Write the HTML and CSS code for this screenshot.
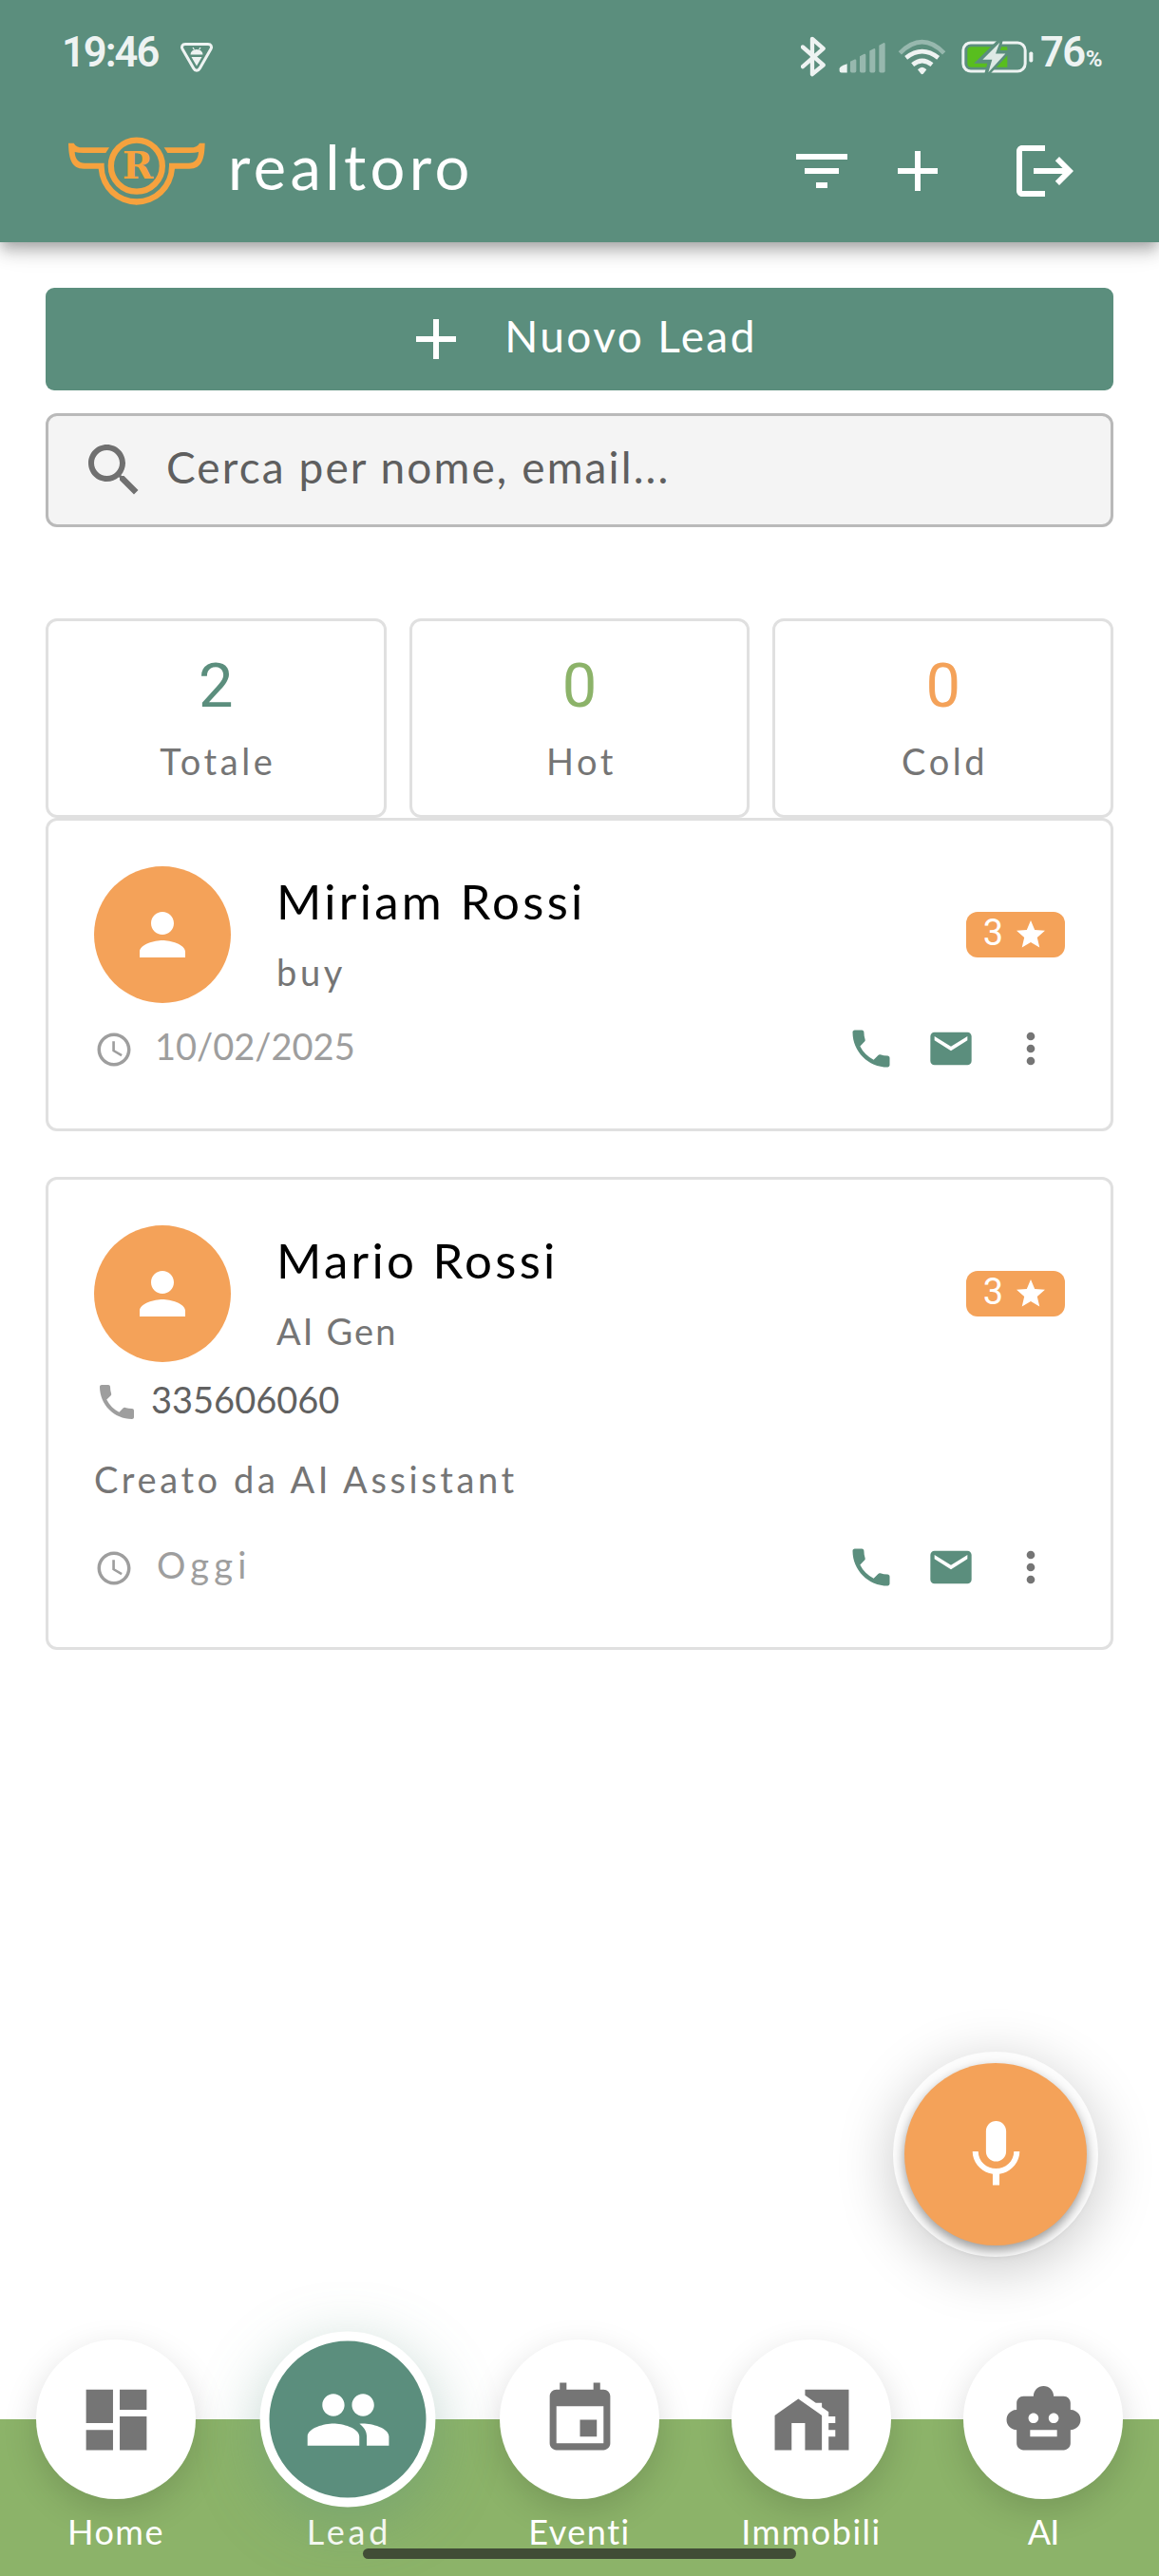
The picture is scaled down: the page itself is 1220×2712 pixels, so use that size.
FILE: index.html
```
<!DOCTYPE html>
<html lang="it">
<head>
  <meta charset="UTF-8">
  <meta name="viewport" content="width=device-width, initial-scale=1.0">
  <title>Realtoro - Lead</title>
  <link rel="stylesheet" href="styles.css">
</head>
<body>
  <!-- icone riutilizzate -->
  <svg class="sprite" aria-hidden="true">
    <symbol id="i-add" viewBox="0 0 24 24"><path d="M19 13h-6v6h-2v-6H5v-2h6V5h2v6h6z"/></symbol>
    <symbol id="i-person" viewBox="0 0 24 24"><path d="M12 12c2.21 0 4-1.79 4-4s-1.79-4-4-4-4 1.79-4 4 1.79 4 4 4zm0 2c-2.67 0-8 1.34-8 4v2h16v-2c0-2.66-5.33-4-8-4z"/></symbol>
    <symbol id="i-star" viewBox="0 0 24 24"><path d="M12 17.27L18.18 21l-1.64-7.03L22 9.24l-7.19-.61L12 2 9.19 8.63 2 9.24l5.46 4.73L5.82 21z"/></symbol>
    <symbol id="i-clock" viewBox="0 0 24 24"><path d="M11.99 2C6.47 2 2 6.48 2 12s4.47 10 9.99 10C17.52 22 22 17.52 22 12S17.52 2 11.99 2zM12 20c-4.42 0-8-3.58-8-8s3.58-8 8-8 8 3.58 8 8-3.58 8-8 8zm.5-13H11v6l5.25 3.15.75-1.23-4.5-2.67z"/></symbol>
    <symbol id="i-phone" viewBox="0 0 24 24"><path d="M6.62 10.79c1.44 2.83 3.76 5.14 6.59 6.59l2.2-2.2c.27-.27.67-.36 1.02-.24 1.12.37 2.33.57 3.57.57.55 0 1 .45 1 1V20c0 .55-.45 1-1 1-9.39 0-17-7.61-17-17 0-.55.45-1 1-1h3.5c.55 0 1 .45 1 1 0 1.25.2 2.45.57 3.57.11.35.03.74-.25 1.02z"/></symbol>
    <symbol id="i-mail" viewBox="0 0 24 24"><path d="M20 4H4c-1.1 0-1.99.9-1.99 2L2 18c0 1.1.9 2 2 2h16c1.1 0 2-.9 2-2V6c0-1.1-.9-2-2-2zm0 4l-8 5-8-5V6l8 5 8-5z"/></symbol>
    <symbol id="i-more" viewBox="0 0 24 24"><path d="M12 8c1.1 0 2-.9 2-2s-.9-2-2-2-2 .9-2 2 .9 2 2 2zm0 2c-1.1 0-2 .9-2 2s.9 2 2 2 2-.9 2-2-.9-2-2-2zm0 6c-1.1 0-2 .9-2 2s.9 2 2 2 2-.9 2-2-.9-2-2-2z"/></symbol>
  </svg>

  <header class="header">
    <div class="status">
      <span class="time">19:46</span>
      <svg class="shield" viewBox="0 0 36 33">
        <path d="M6 2.500h24c3 0 4.300 2.300 3 5L21.300 28c-1.500 2.900-5 2.900-6.500 0L3 7.500C1.700 4.800 3 2.500 6 2.500z" fill="none" stroke="#eef3f2" stroke-width="3"/>
        <path d="M11.500 13.500a6.500 5.500 0 0 1 13 0zM12.500 16h11l-5.500 9.500z" fill="#eef3f2"/>
        <path d="M14 6l1.500 2.500M22 6l-1.500 2.500" stroke="#eef3f2" stroke-width="1.200"/>
      </svg>
      <svg class="indicators" viewBox="41 38 735 128">
        <path d="M47 72L112 129 77 158V46L112 77 47 134" fill="none" stroke="#eef3f2" stroke-width="13" stroke-linecap="round" stroke-linejoin="round"/>
        <path d="M163 140q0-8 24-15v28h-18q-6 0-6-6z" fill="#eef3f2"/>
        <path d="M197 118l14-7q5-1 5 4v33q0 5-5 5h-9q-5 0-5-5zM227 101l14-7q5-1 5 4v50q0 5-5 5h-9q-5 0-5-5zM258 84l13-7q5-1 5 4v67q0 5-5 5h-8q-5 0-5-5zM288 67l14-8q5-1 5 4v85q0 5-5 5h-9q-5 0-5-5z" fill="#97b8ae"/>
        <path d="M354 91Q424 21 493 91" fill="none" stroke="#97b8ae" stroke-width="14"/>
        <path d="M373 106Q424 66 475 106M394 128Q424 103 455 128" fill="none" stroke="#eef3f2" stroke-width="14"/>
        <path d="M410 143q14-15 28 0l-10 13q-4 4-8 0z" fill="#eef3f2"/>
        <rect x="553.500" y="58.500" width="196" height="90" rx="24" fill="none" stroke="#eef3f2" stroke-width="9"/>
        <path d="M579 71h114v65H579q-12 0-12-12V83q0-12 12-12z" fill="#58be1e"/>
        <rect x="762" y="87" width="12" height="33" rx="5" fill="#eef3f2"/>
        <path d="M671 52L606 116H640L628 158 691 90H661z" fill="#5b8e7d" stroke="#5b8e7d" stroke-width="15"/>
        <path d="M669 58L615 112H645L633 152 687 93H656z" fill="#dde9e5"/>
      </svg>
      <span class="battery">76<small>%</small></span>
    </div>
    <div class="appbar">
      <svg class="logo" viewBox="36 42 432 216">
        <defs><path id="wing" d="M36 62H53Q60 76 82 76H165L154 93H84Q66 93 56 90Q58 125 88 125H149V134A102.500 104 0 0 0 252 238V257A121 123 0 0 1 131 143H85C44 143 37 108 36 62Z"/></defs>
        <use href="#wing"/>
        <use href="#wing" transform="translate(503 0) scale(-1 1)"/>
        <circle cx="251.500" cy="134" r="81" fill="none" stroke="#f6a23e" stroke-width="19"/>
        <text class="logo-letter" x="255" y="175" text-anchor="middle">R</text>
      </svg>
      <span class="brand">realtoro</span>
      <svg class="icon filter" viewBox="0 0 24 24"><path d="M10 18h4v-2h-4v2zM3 6v2h18V6H3zm3 7h12v-2H6v2z"/></svg>
      <svg class="icon add"><use href="#i-add"/></svg>
      <svg class="icon logout" viewBox="0 0 24 24"><path d="M17 7l-1.410 1.410L18.170 11H8v2h10.170l-2.580 2.580L17 17l5-5zM4 5h8V3H4c-1.100 0-2 .9-2 2v14c0 1.100.9 2 2 2h8v-2H4V5z"/></svg>
    </div>
  </header>

  <main class="content">
    <div class="new-lead">
      <svg class="icon"><use href="#i-add"/></svg>
      <span>Nuovo Lead</span>
    </div>
    <div class="search">
      <svg class="icon" viewBox="0 0 24 24"><path d="M15.500 14h-.79l-.28-.27C15.410 12.590 16 11.110 16 9.500 16 5.910 13.090 3 9.500 3S3 5.910 3 9.500 5.910 16 9.500 16c1.610 0 3.090-.59 4.230-1.570l.27.28v.79l5 4.990L20.490 19l-4.990-5zm-6 0C7.010 14 5 11.990 5 9.500S7.010 5 9.500 5 14 7.010 14 9.500 11.990 14 9.500 14z"/></svg>
      <span>Cerca per nome, email...</span>
    </div>

    <div class="stats">
      <div class="stat total"><b>2</b><span>Totale</span></div>
      <div class="stat hot"><b>0</b><span>Hot</span></div>
      <div class="stat cold"><b>0</b><span>Cold</span></div>
    </div>

    <article class="lead">
      <div class="lead-head">
        <div class="avatar"><svg class="icon"><use href="#i-person"/></svg></div>
        <div class="who">
          <h2>Miriam Rossi</h2>
          <p>buy</p>
        </div>
        <div class="badge"><span>3</span><svg><use href="#i-star"/></svg></div>
      </div>
      <div class="lead-foot">
        <svg class="clock"><use href="#i-clock"/></svg>
        <span class="date digits">10/02/2025</span>
        <div class="actions">
          <svg><use href="#i-phone"/></svg>
          <svg><use href="#i-mail"/></svg>
          <svg class="more"><use href="#i-more"/></svg>
        </div>
      </div>
    </article>

    <article class="lead">
      <div class="lead-head">
        <div class="avatar"><svg class="icon"><use href="#i-person"/></svg></div>
        <div class="who">
          <h2>Mario Rossi</h2>
          <p class="source">AI Gen</p>
        </div>
        <div class="badge"><span>3</span><svg><use href="#i-star"/></svg></div>
      </div>
      <div class="phone">
        <svg><use href="#i-phone"/></svg>
        <span class="digits">335606060</span>
      </div>
      <p class="note">Creato da AI Assistant</p>
      <div class="lead-foot">
        <svg class="clock"><use href="#i-clock"/></svg>
        <span class="date today">Oggi</span>
        <div class="actions">
          <svg><use href="#i-phone"/></svg>
          <svg><use href="#i-mail"/></svg>
          <svg class="more"><use href="#i-more"/></svg>
        </div>
      </div>
    </article>
  </main>

  <div class="fab">
    <div class="fab-inner">
      <svg viewBox="0 0 24 24"><path d="M12 14c1.660 0 2.990-1.340 2.990-3L15 5c0-1.660-1.340-3-3-3S9 3.340 9 5v6c0 1.660 1.340 3 3 3zm5.300-3c0 3-2.540 5.100-5.300 5.100S6.700 14 6.700 11H5c0 3.410 2.720 6.230 6 6.720V21h2v-3.280c3.280-.48 6-3.300 6-6.720h-1.700z"/></svg>
    </div>
  </div>

  <nav class="tabs">
    <div class="tab">
      <div class="bubble"><svg viewBox="0 0 24 24"><path d="M3 13h8V3H3v10zm0 8h8v-6H3v6zm10 0h8V11h-8v10zm0-18v6h8V3h-8z"/></svg></div>
      <span>Home</span>
    </div>
    <div class="tab active">
      <div class="bubble"><svg viewBox="0 0 24 24"><path d="M16 11c1.660 0 2.990-1.340 2.990-3S17.660 5 16 5s-3 1.340-3 3 1.340 3 3 3zm-8 0c1.660 0 2.990-1.340 2.990-3S9.660 5 8 5 5 6.340 5 8s1.340 3 3 3zm0 2c-2.330 0-7 1.170-7 3.500V19h14v-2.500c0-2.330-4.670-3.500-7-3.500zm8 0c-.29 0-.62.02-.97.05 1.160.84 1.970 1.970 1.970 3.450V19h6v-2.500c0-2.330-4.670-3.500-7-3.500z"/></svg></div>
      <span>Lead</span>
    </div>
    <div class="tab">
      <div class="bubble"><svg viewBox="0 0 24 24"><path d="M17 12h-5v5h5v-5zM16 1v2H8V1H6v2H5c-1.110 0-1.990.9-1.990 2L3 19c0 1.100.89 2 2 2h14c1.100 0 2-.9 2-2V5c0-1.100-.9-2-2-2h-1V1h-2zm3 18H5V8h14v11z"/></svg></div>
      <span>Eventi</span>
    </div>
    <div class="tab">
      <div class="bubble"><svg viewBox="0 0 24 24"><path d="M1 10.700V21h5v-8h4v8h5V10.700L8 5.800zM10 3v1.750L13.200 7H15v1.250l2 1.450V11h2v2h-2v2h2v2h-2v4h6V3z"/></svg></div>
      <span>Immobili</span>
    </div>
    <div class="tab ai">
      <div class="bubble"><svg viewBox="0 0 24 24"><path d="M20 9V7c0-1.100-.9-2-2-2h-3c0-1.660-1.340-3-3-3S9 3.340 9 5H6c-1.100 0-2 .9-2 2v2c-1.660 0-3 1.340-3 3s1.340 3 3 3v4c0 1.100.9 2 2 2h12c1.100 0 2-.9 2-2v-4c1.660 0 3-1.340 3-3s-1.340-3-3-3zM7.500 11.500c0-.83.67-1.500 1.500-1.500s1.500.67 1.500 1.500S9.830 13 9 13s-1.500-.67-1.500-1.500zM16 17H8v-2h8v2zm-1-4c-.83 0-1.500-.67-1.500-1.500S14.170 10 15 10s1.500.67 1.500 1.500S15.830 13 15 13z"/></svg></div>
      <span>AI</span>
    </div>
    <div class="home-bar"></div>
  </nav>
</body>
</html>
```
FILE: styles.css
```
* { box-sizing: border-box; }
body { margin: 0; height: 2712px; display: flex; flex-direction: column; position: relative; overflow: hidden; background: #fff; font-family: Lato, sans-serif; font-size: 38px; letter-spacing: 3.6px; color: #757575; }
h2, p { margin: 0; font-weight: 400; }
svg { flex: none; fill: currentColor; }
.sprite { position: absolute; width: 0; height: 0; }
.icon { width: 72px; height: 72px; }
.digits { letter-spacing: 0; }

/* header */
.header { height: 255px; background: #5b8e7d; color: #fff; box-shadow: 0 6px 12px -3px rgba(0,0,0,0.2), 0 12px 15px rgba(0,0,0,0.14), 0 3px 30px rgba(0,0,0,0.12); }
.status { display: flex; align-items: center; height: 118px; padding-left: 65px; font-family: Roboto, sans-serif; font-weight: 600; font-size: 43.5px; color: #eef3f2; }
.time { width: 124px; padding-bottom: 7px; letter-spacing: -2px; }
.shield { width: 36px; height: 33px; margin-top: 3px; }
.indicators { width: 245px; height: 43px; margin-left: auto; }
.battery { width: 123px; padding: 0 0 7px 7px; margin-right: 9px; letter-spacing: -1.5px; }
.battery small { font-size: 24px; font-weight: 700; letter-spacing: 0; margin-left: 1px; }
.appbar { display: flex; align-items: center; height: 124px; padding: 0 84px 0 72px; }
.logo { width: 144px; height: 72px; color: #f6a23e; }
.logo-letter { font: bold 117px "DejaVu Serif", serif; letter-spacing: 0; }
.brand { margin: 0 auto 11px 24px; font-size: 65px; letter-spacing: 4.4px; }
.add { margin-left: 29px; }
.logout { margin-left: 62px; }

/* contenuto */
.content { padding: 48px 48px 0; }
.new-lead { display: flex; align-items: center; justify-content: center; height: 108px; border-radius: 9px; background: #5b8e7d; color: #fff; font-size: 46px; letter-spacing: 2.4px; }
.new-lead .icon { margin-right: 36px; }
.new-lead span { margin-bottom: 8px; }
.search { display: flex; align-items: center; height: 120px; margin-top: 24px; padding-left: 33px; border: 3px solid #b9b9b9; border-radius: 12px; background: #f4f4f4; color: #5f5f5f; font-size: 46px; letter-spacing: 2.1px; }
.search .icon { margin-right: 19px; color: #707070; }
.search span { margin-bottom: 8px; }
.stats { display: grid; grid-template-columns: repeat(3, 1fr); gap: 24px; margin-top: 96px; }
.stat { height: 210px; padding-top: 20px; border: 3px solid #e0e0e0; border-radius: 12px; text-align: center; }
.stat b { display: block; font-family: Roboto, sans-serif; font-weight: 400; font-size: 65px; line-height: 96px; letter-spacing: 0; }
.stat span { display: block; line-height: 62px; margin-right: -4px; }
.total b { color: #5b8e7d; }
.hot b { color: #8cb369; }
.cold b { color: #f4a259; }

.lead { padding: 48px 48px 36px; border: 3px solid #e0e0e0; border-radius: 12px; }
.lead + .lead { margin-top: 48px; }
.lead-head { display: flex; align-items: center; height: 144px; }
.avatar { display: flex; align-items: center; justify-content: center; width: 144px; height: 144px; border-radius: 50%; background: #f4a259; color: #fff; }
.who { flex: 1; align-self: flex-start; margin-left: 48px; }
.who h2 { font-size: 51px; line-height: 74px; letter-spacing: 3.3px; color: #000; }
.who p { line-height: 74px; }
.who .source { letter-spacing: 2.1px; }
.badge { display: flex; align-items: center; gap: 11px; height: 48px; padding: 0 18px; border-radius: 12px; background: #f4a259; color: #fff; }
.badge span { margin-bottom: 5px; font-family: Roboto, sans-serif; letter-spacing: 0; }
.badge svg { width: 36px; height: 36px; }
.phone { display: flex; align-items: center; height: 84px; color: #616161; }
.phone svg { width: 48px; height: 48px; margin-right: 12px; color: #9e9e9e; }
.phone span { margin-bottom: 7px; }
.note { line-height: 78px; margin-bottom: 6px; }
.lead-foot { display: flex; align-items: center; height: 96px; color: #9e9e9e; }
.clock { width: 42px; height: 42px; margin: 2px 22px 0 0; }
.date { margin-bottom: 7px; }
.today { margin-left: 2px; letter-spacing: 5.3px; }
.actions { display: flex; gap: 32px; margin-left: auto; padding-right: 10px; color: #5b8e7d; }
.actions svg { width: 52px; height: 52px; }
.actions .more { color: #757575; }

/* pulsante vocale */
.fab { position: absolute; left: 940px; top: 2160px; width: 216px; height: 216px; padding: 12px; border-radius: 50%; background: #fcfcfc; box-shadow: 0 12px 60px rgba(0,0,0,0.22); }
.fab-inner { display: flex; align-items: center; justify-content: center; height: 192px; border-radius: 50%; background: #f4a259; color: #fff; box-shadow: 0 5px 12px rgba(0,0,0,0.4); }
.fab svg { width: 85px; height: 85px; }

/* barra in basso */
.tabs { position: relative; display: flex; height: 165px; margin-top: auto; background: #8cb369; }
.tab { flex: 1; display: flex; flex-direction: column; align-items: center; margin-top: -84px; color: #fff; font-size: 36px; letter-spacing: 1.5px; }
.tab span { margin-top: 10px; line-height: 48px; }
.bubble { display: flex; align-items: center; justify-content: center; width: 168px; height: 168px; border-radius: 50%; background: #fff; color: #757575; box-shadow: 0 12px 36px rgba(0,0,0,0.15); }
.bubble svg { width: 85px; height: 85px; }
.active .bubble { transform: scale(1.1); border: 9px solid #fff; background: #5b8e7d; color: #fff; box-shadow: 0 15px 60px rgba(91,142,125,0.4); }
.active span { letter-spacing: 3.8px; margin-right: -3px; opacity: 0.9; }
.ai span { letter-spacing: -1px; }
.home-bar { position: absolute; left: 382px; bottom: 18px; width: 456px; height: 11px; border-radius: 6px; background: #414d36; }
```
